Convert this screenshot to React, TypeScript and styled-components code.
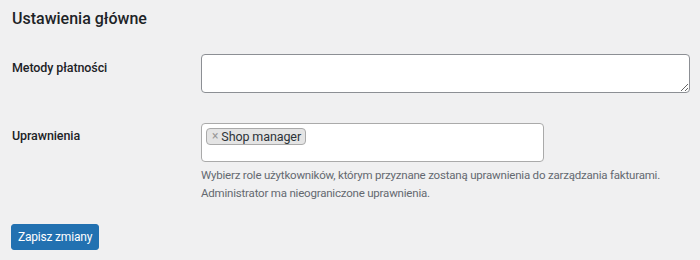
import React from "react";
import styled, { createGlobalStyle } from "styled-components";

const GlobalStyle = createGlobalStyle`
  html, body {
    margin: 0;
    padding: 0;
    background: #f0f0f1;
  }
  body {
    font-family: Roboto, "Open Sans", "Liberation Sans", sans-serif;
    font-size: 12px;
    color: #3c434a;
  }
`;

const Page = styled.div`
  width: 700px;
  height: 260px;
  padding: 0 10px 0 12px;
  box-sizing: border-box;
  overflow: hidden;
`;

const Title = styled.h2`
  margin: 0;
  padding-top: 8px;
  font-size: 16px;
  line-height: 22px;
  font-weight: 500;
  color: #1d2327;
`;

const FormTable = styled.div`
  display: grid;
  grid-template-columns: 189px 1fr;
  margin-top: 24px;
`;

const Label = styled.div<{ $top: number }>`
  padding-top: ${(p) => p.$top}px;
  font-size: 12.5px;
  line-height: 20px;
  font-weight: 500;
  letter-spacing: -0.1px;
  color: #1d2327;
`;

const Cell = styled.div<{ $gap?: number }>`
  display: flex;
  flex-direction: column;
  align-items: flex-start;
  padding-bottom: ${(p) => p.$gap ?? 0}px;
`;

const TextArea = styled.textarea`
  width: 489px;
  height: 39px;
  box-sizing: border-box;
  border: 1px solid #8c8f94;
  border-radius: 4px;
  background: #fff;
  resize: vertical;
  font: inherit;
  padding: 2px 6px;
  margin: 0;
  display: block;
`;

const SelectBox = styled.div`
  width: 343px;
  height: 39px;
  box-sizing: border-box;
  border: 1px solid #aaa;
  border-radius: 4px;
  background: #fff;
  padding: 4px 4px;
  display: flex;
  align-items: flex-start;
`;

const Tag = styled.span`
  display: inline-flex;
  align-items: center;
  height: 17px;
  box-sizing: border-box;
  padding: 0 4px 0 5px;
  background: #e4e4e4;
  border: 1px solid #aaa;
  border-radius: 4px;
  font-size: 12.5px;
  line-height: 15px;
  letter-spacing: -0.1px;
  color: #2c3338;
  white-space: nowrap;
`;

const Remove = styled.span`
  color: #999;
  font-size: 12px;
  margin-right: 3px;
`;

const Description = styled.p`
  margin: 4px 0 0;
  font-size: 11.5px;
  line-height: 18px;
  letter-spacing: -0.2px;
  color: #646970;
  white-space: nowrap;
`;

const SubmitRow = styled.div`
  margin-top: 22px;
`;

const Button = styled.button`
  height: 26px;
  padding: 0 6px;
  margin-left: -1px;
  border: 1px solid #2271b1;
  border-radius: 3px;
  background: #2271b1;
  color: #fff;
  font: inherit;
  font-size: 12px;
  line-height: 24px;
  letter-spacing: -0.2px;
  cursor: pointer;
`;

export default function App() {
  return (
    <Page>
      <GlobalStyle />
      <Title>Ustawienia główne</Title>
      <FormTable>
        <Label $top={4}>Metody płatności</Label>
        <Cell $gap={30}>
          <TextArea />
        </Cell>
        <Label $top={3}>Uprawnienia</Label>
        <Cell>
          <SelectBox>
            <Tag>
              <Remove>×</Remove>Shop manager
            </Tag>
          </SelectBox>
          <Description>
            Wybierz role użytkowników, którym przyznane zostaną uprawnienia do
            zarządzania fakturami.
            <br />
            Administrator ma nieograniczone uprawnienia.
          </Description>
        </Cell>
      </FormTable>
      <SubmitRow>
        <Button>Zapisz zmiany</Button>
      </SubmitRow>
    </Page>
  );
}
